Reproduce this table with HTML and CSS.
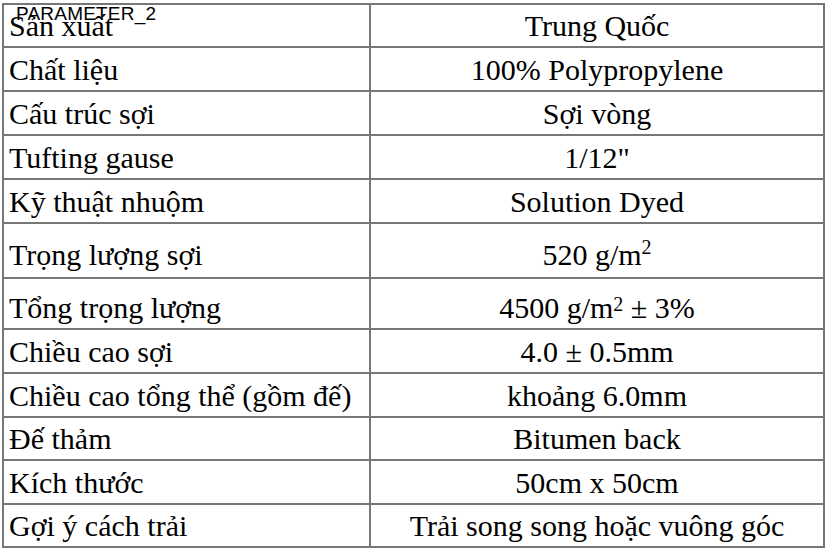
FILE: index.html
```html
<!DOCTYPE html>
<html>
<head>
<meta charset="utf-8">
<link rel="stylesheet" href="styles.css">
</head>
<body>
<div class="page">
  <div class="label">PARAMETER_2</div>
  <table class="spec">
    <colgroup><col class="c1"><col class="c2"></colgroup>
    <tr class="r43"><td>Sản xuất</td><td class="val">Trung Quốc</td></tr>
    <tr class="r44"><td>Chất liệu</td><td class="val">100% Polypropylene</td></tr>
    <tr class="r44"><td>Cấu trúc sợi</td><td class="val">Sợi vòng</td></tr>
    <tr class="r44"><td>Tufting gause</td><td class="val">1/12"</td></tr>
    <tr class="r44"><td>Kỹ thuật nhuộm</td><td class="val">Solution Dyed</td></tr>
    <tr class="r55"><td>Trọng lượng sợi</td><td class="val">520 g/m<span class="sup sup-hi">2</span></td></tr>
    <tr class="r51"><td>Tổng trọng lượng</td><td class="val">4500 g/m<span class="sup sup-lo">2</span> ± 3%</td></tr>
    <tr class="r44"><td>Chiều cao sợi</td><td class="val">4.0 ± 0.5mm</td></tr>
    <tr class="r44"><td>Chiều cao tổng thể (gồm đế)</td><td class="val">khoảng 6.0mm</td></tr>
    <tr class="r43"><td>Đế thảm</td><td class="val">Bitumen back</td></tr>
    <tr class="r44"><td>Kích thước</td><td class="val">50cm x 50cm</td></tr>
    <tr class="r43"><td>Gợi ý cách trải</td><td class="val">Trải song song hoặc vuông góc</td></tr>
  </table>
</div>
</body>
</html>
```
FILE: styles.css
```css
html, body {
  margin: 0;
  padding: 0;
  background: #ffffff;
}
.page {
  position: relative;
  padding: 3px 0 0 2px;
}
.label {
  position: absolute;
  left: 16px;
  top: 3px;
  font-family: "Liberation Sans", Arial, sans-serif;
  font-size: 19px;
  letter-spacing: 0.2px;
  color: #000;
  white-space: nowrap;
  z-index: 2;
}
.spec {
  border-collapse: collapse;
  table-layout: fixed;
  width: 821px;
  font-family: "Liberation Serif", "Times New Roman", serif;
  font-size: 30px;
  color: #000;
}
.c1 { width: 367px; }
.c2 { width: 454px; }
.spec td {
  border: 2px solid #777777;
  padding: 0 0 3px 5px;
  line-height: 34px;
  vertical-align: bottom;
  white-space: nowrap;
}
.spec td.val {
  text-align: center;
  padding-left: 0;
}
.r43 { height: 43px; }
.r44 { height: 44px; }
.r51 { height: 51px; }
.r55 { height: 55px; }
.r55 td { padding-bottom: 5px; }
.sup {
  font-size: 20px;
  line-height: 0;
}
.sup-hi { vertical-align: 11px; }
.sup-lo { vertical-align: 7px; }
```
